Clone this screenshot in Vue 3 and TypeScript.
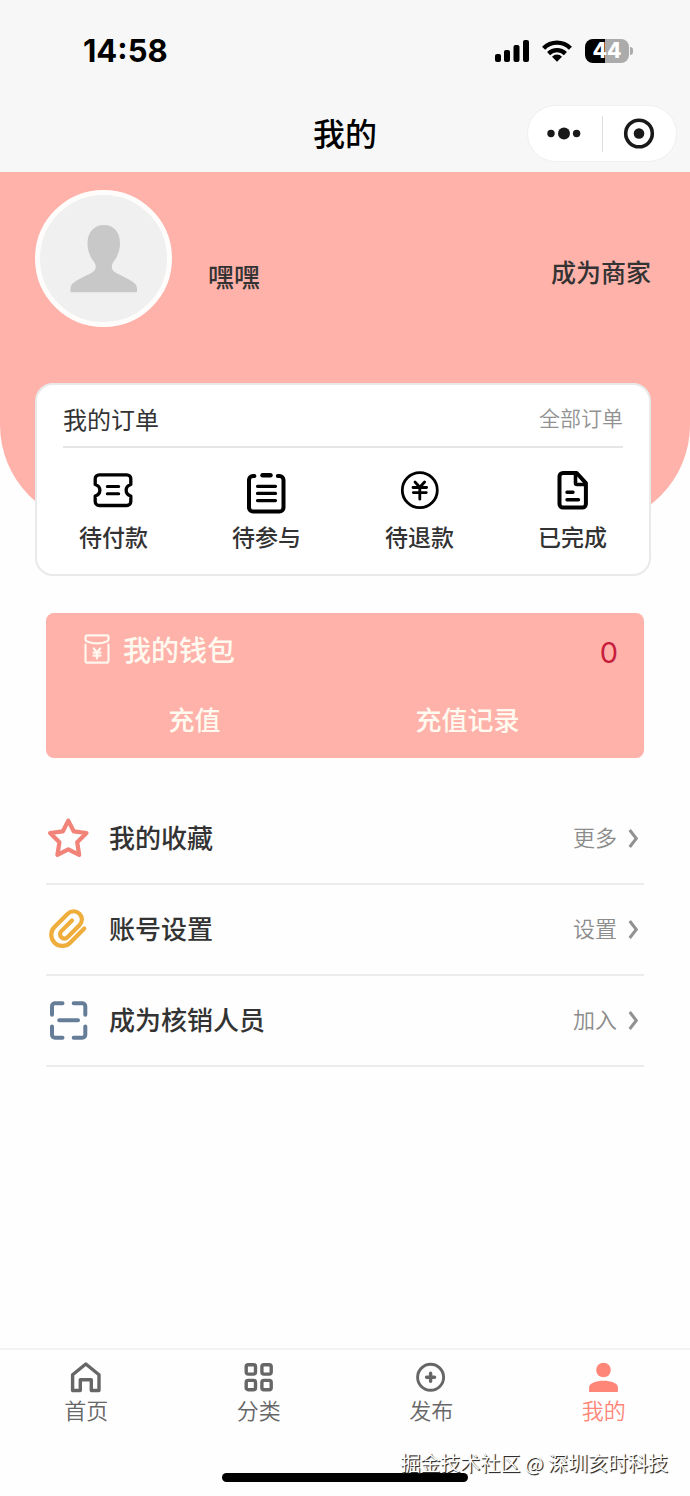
<script setup lang="ts">
import { ref } from 'vue'

type OrderIcon = 'ticket' | 'list' | 'yen' | 'doc'
type MenuIcon = 'star' | 'clip' | 'scan'
type TabIcon = 'home' | 'grid' | 'plus' | 'user'

interface Order { icon: OrderIcon; label: string }
interface MenuEntry { icon: MenuIcon; label: string; hint: string }
interface Tab { icon: TabIcon; label: string }

const orders: Order[] = [
  { icon: 'ticket', label: '待付款' },
  { icon: 'list', label: '待参与' },
  { icon: 'yen', label: '待退款' },
  { icon: 'doc', label: '已完成' },
]

const menu: MenuEntry[] = [
  { icon: 'star', label: '我的收藏', hint: '更多' },
  { icon: 'clip', label: '账号设置', hint: '设置' },
  { icon: 'scan', label: '成为核销人员', hint: '加入' },
]

const tabs: Tab[] = [
  { icon: 'home', label: '首页' },
  { icon: 'grid', label: '分类' },
  { icon: 'plus', label: '发布' },
  { icon: 'user', label: '我的' },
]

const balance = ref<number>(0)
const activeTab = ref<TabIcon>('user')
</script>

<template>
  <div class="page">
    <header class="top">
      <div class="status">
        <span class="time">14:58</span>
        <div class="indicators">
          <svg width="35" height="24" viewBox="0 0 35 24" aria-hidden="true">
            <rect x="1" y="15" width="6" height="8" rx="2" />
            <rect x="10" y="11" width="6" height="12" rx="2" />
            <rect x="19.500" y="6" width="6" height="17" rx="2" />
            <rect x="29" y="1" width="6" height="22" rx="2" />
          </svg>
          <svg width="30" height="24" viewBox="0 0 30 24" aria-hidden="true">
            <g fill="none" stroke="#000" stroke-width="4.400">
              <path d="M1.600 9.200a19 19 0 0 1 26.800 0" />
              <path d="M6.600 14.600a12 12 0 0 1 16.800 0" />
            </g>
            <path d="M15 22.800l-5-5.100a7 7 0 0 1 10 0z" />
          </svg>
          <span class="battery"><span class="cell">44</span><i class="cap"></i></span>
        </div>
      </div>
      <div class="nav">
        <h1>我的</h1>
        <div class="capsule">
          <button type="button" aria-label="更多">
            <svg width="36" height="14" viewBox="0 0.500 36 14" fill="#191919">
              <circle cx="4" cy="7" r="3.700" />
              <circle cx="17" cy="7" r="6" />
              <circle cx="29.600" cy="7" r="3.700" />
            </svg>
          </button>
          <i class="split"></i>
          <button type="button" aria-label="关闭">
            <svg width="32" height="32" viewBox="0 0.500 32 32">
              <circle cx="16" cy="16" r="13.300" fill="none" stroke="#191919" stroke-width="3.600" />
              <circle cx="16" cy="16" r="5.300" fill="#191919" />
            </svg>
          </button>
        </div>
      </div>
    </header>

    <main>
      <section class="hero">
        <div class="profile">
          <svg class="avatar" viewBox="0 0 137 137" role="img" aria-label="头像">
            <circle cx="68.500" cy="68.500" r="66" fill="#f0f0f0" stroke="#fffdfb" stroke-width="5" />
            <path
              fill="#c8c8c8"
              d="M69 35c-10 0-16.500 7.500-16.500 18 0 9 3.500 15 7 19.500 2 3 1.500 7-1 9-3 2.500-8 4-12 6.500-7 3.500-11 6-11 10.500v3.700h66.500v-3.700c0-4.500-4-7-11-10.500-4-2.500-9-4-12-6.500-2.500-2-3-6-1-9 3.500-4.500 7-10.500 7-19.500 0-10.500-6-18-16-18z"
            />
          </svg>
          <span class="name">嘿嘿</span>
          <a class="merchant" href="#">成为商家</a>
        </div>
      </section>

      <section class="orders">
        <div class="orders-head">
          <h2>我的订单</h2>
          <a href="#">全部订单</a>
        </div>
        <div class="orders-grid">
          <button v-for="o in orders" :key="o.icon" type="button" class="order">
            <svg viewBox="1 0 48 48" width="48" height="48" fill="none" stroke="#000" stroke-linecap="round" stroke-linejoin="round" aria-hidden="true">
              <template v-if="o.icon === 'ticket'">
                <path stroke-width="3.300" d="M10.200 8.800h27.600a4 4 0 0 1 4 4v5.700c-6.200 2-6.200 9.500 0 11.500v5.500a4 4 0 0 1-4 4H10.200a4 4 0 0 1-4-4V30c6.200-2 6.200-9.500 0-11.500v-5.700a4 4 0 0 1 4-4z" />
                <path stroke-width="3" d="M18.300 20.600h11.400M18.300 27.700h11.400" />
              </template>
              <template v-else-if="o.icon === 'list'">
                <path stroke-width="4" d="M12.400 10H11a4 4 0 0 0-4 4v27.500a4 4 0 0 0 4 4h26.500a4 4 0 0 0 4-4V14a4 4 0 0 0-4-4h-1.700" />
                <path stroke-width="4.400" d="M20.500 9.300h8" />
                <path stroke-width="3.200" d="M15.500 20.300h18M15.500 27.400h18M15.500 34.600h18" />
              </template>
              <template v-else-if="o.icon === 'yen'">
                <circle cx="24.800" cy="24.200" r="17.500" stroke-width="2.800" />
                <path stroke-width="2.800" d="M20 16l4.800 5.200 4.800-5.200M18 21.500h13.600M18.300 26.600h13M24.800 21.500v11.700" />
              </template>
              <template v-else>
                <path stroke-width="4" d="M15 7h13.700l9.200 10.200v20.800a3.500 3.500 0 0 1-3.500 3.500H15a3.500 3.500 0 0 1-3.500-3.500V10.500A3.500 3.500 0 0 1 15 7z" />
                <path stroke-width="3.600" d="M27.500 8v9a1.500 1.500 0 0 0 1.500 1.500h8.500" />
                <path stroke-width="3.400" d="M19 26.300h6M19 33.700h11.500" />
              </template>
            </svg>
            <span>{{ o.label }}</span>
          </button>
        </div>
      </section>

      <section class="wallet">
        <div class="wallet-head">
          <svg width="32" height="32" viewBox="0 0 32 32" fill="none" stroke="#fff6ee" stroke-width="2.200" stroke-linecap="round" stroke-linejoin="round" aria-hidden="true">
            <path d="M6.500 2.300h19a2 2 0 0 1 2 2V6.500a2 2 0 0 1-1.600 1.900q-9.900 4-19.800 0A2 2 0 0 1 4.500 6.500V4.300a2 2 0 0 1 2-2z" />
            <path d="M4.500 11.500v16.200a2 2 0 0 0 2 2h19a2 2 0 0 0 2-2V11.500" />
            <path d="M12.800 15.500l3.200 4 3.200-4M12.500 19.700h7M12.500 22.700h7M16 19.500v6" />
          </svg>
          <h2>我的钱包</h2>
          <span class="balance">{{ balance }}</span>
        </div>
        <div class="wallet-actions">
          <button type="button">充值</button>
          <button type="button">充值记录</button>
        </div>
      </section>

      <nav class="menu">
        <a v-for="m in menu" :key="m.icon" href="#" class="row">
          <svg viewBox="0 0 44 44" width="44" height="44" fill="none" stroke-width="4" stroke-linecap="round" stroke-linejoin="round" aria-hidden="true">
            <path v-if="m.icon === 'star'" stroke="#f28379" stroke-width="4.200" d="M22.300 3.600l5.400 10.700 12.800 1.700-9.300 9.300 2 12.600-10.900-5.600-10.900 5.600 2-12.600-9.300-9.300 12.800-1.700z" />
            <path v-else-if="m.icon === 'clip'" stroke="#efad3b" stroke-width="4.200" transform="translate(21.500 21.500) rotate(45)" d="M11.200-12.500V7.400A11.100 11.100 0 0 1-11 7.400V-11.400A8.250 8.250 0 0 1 5.500-11.400V5.500A4.300 4.300 0 0 1-3.200 5.500V-9.500" />
            <path v-else stroke="#667d98" d="M16.500 4.200H9a3 3 0 0 0-3 3v8.500M27.700 4.200h8.600a3 3 0 0 1 3 3v8.500M16.500 38.800H9a3 3 0 0 1-3-3v-8.300M27.700 38.800h8.600a3 3 0 0 0 3-3v-8.300M13.200 21.300h18.800" />
          </svg>
          <span class="label">{{ m.label }}</span>
          <span class="hint">{{ m.hint }}</span>
          <svg class="chevron" viewBox="0 0 10 20" width="10" height="20" fill="none" stroke="#919191" stroke-width="3" aria-hidden="true">
            <path d="M1.700 1L8.300 9.500l-6.600 8.500" />
          </svg>
        </a>
      </nav>
    </main>

    <footer>
      <nav class="tabs">
        <button v-for="t in tabs" :key="t.icon" type="button" class="tab" :class="{ active: t.icon === activeTab }" @click="activeTab = t.icon">
          <svg viewBox="0 0 32 32" width="32" height="32" fill="none" stroke="currentColor" stroke-width="3.400" stroke-linejoin="round" aria-hidden="true">
            <path v-if="t.icon === 'home'" d="M2.600 13.700L15.800 3l13.200 10.700v15.800h-7.700V18.800h-11v10.700H2.600z" />
            <template v-else-if="t.icon === 'grid'">
              <rect x="3.200" y="3.800" width="9.300" height="9.300" rx="2" />
              <rect x="18.900" y="3.800" width="9.300" height="9.300" rx="2" />
              <rect x="3.200" y="19.400" width="9.300" height="9.300" rx="2" />
              <rect x="18.900" y="19.400" width="9.300" height="9.300" rx="2" />
            </template>
            <template v-else-if="t.icon === 'plus'">
              <circle cx="15.600" cy="16.300" r="13" stroke-width="2.900" />
              <path stroke-linecap="round" d="M15.600 12.300v8M11.600 16.300h8" />
            </template>
            <g v-else fill="currentColor" stroke="none">
              <circle cx="15.500" cy="9" r="7.300" />
              <path d="M1.100 31v-4.500c0-4.500 7-6.800 14.400-6.800s14.400 2.300 14.400 6.800V31z" />
            </g>
          </svg>
          <span>{{ t.label }}</span>
        </button>
      </nav>
      <div class="home-bar"></div>
      <p class="credit">掘金技术社区 @ 深圳亥时科技</p>
    </footer>
  </div>
</template>

<style>
body {
  margin: 0;
  background: #fefefe;
}
</style>

<style scoped>
.page {
  display: flex;
  flex-direction: column;
  min-height: 100vh;
  color: #333;
  font-family: "Noto Sans CJK SC", "Noto Sans", sans-serif;
}
h1, h2, p {
  margin: 0;
}
button {
  padding: 0;
  border: 0;
  background: none;
  color: inherit;
  font: inherit;
  cursor: pointer;
}
a {
  color: inherit;
  text-decoration: none;
}
svg {
  display: block;
  flex: none;
}
main {
  flex: 1;
}

.top {
  background: #f7f7f7;
  color: #000;
}
.status {
  display: flex;
  align-items: center;
  justify-content: space-between;
  height: 102px;
  padding: 0 57px 0 83px;
}
.time {
  font: 700 31px/36px Inter, sans-serif;
}
.indicators {
  display: flex;
  align-items: center;
  gap: 13px;
}
.battery {
  display: flex;
  align-items: center;
  gap: 1px;
}
.cell {
  width: 44px;
  border-radius: 8px;
  background: linear-gradient(90deg, #000 45%, #ababab 45%);
  color: #fff;
  font: 800 21px/24px Inter, sans-serif;
  text-align: center;
}
.cap {
  width: 3px;
  height: 8px;
  border-radius: 0 4px 4px 0;
  background: #ababab;
}
.nav {
  display: grid;
  grid-template-columns: 1fr auto 1fr;
  align-items: center;
  height: 63px;
  padding: 0 13px 7px;
}
.nav h1 {
  grid-column: 2;
  padding-bottom: 4px;
  font-size: 32px;
  font-weight: 500;
  line-height: 40px;
}
.capsule {
  justify-self: end;
  display: flex;
  align-items: center;
  box-sizing: border-box;
  width: 150px;
  height: 57px;
  border: 1px solid #f0f0f0;
  border-radius: 29px;
  background: #fff;
}
.capsule button {
  flex: 1;
  display: flex;
  align-items: center;
  justify-content: center;
  height: 100%;
}
.split {
  width: 1px;
  height: 36px;
  background: #dedede;
}

.hero {
  box-sizing: border-box;
  height: 353px;
  padding: 18px 39px 0 35px;
  border-radius: 0 0 100px 100px;
  background: #ffb2aa;
}
.profile {
  display: flex;
  align-items: flex-end;
}
.avatar {
  width: 137px;
  height: 137px;
}
.name {
  margin: 0 auto 35px 36px;
  font-size: 26px;
  font-weight: 500;
  line-height: 32px;
}
.merchant {
  margin-bottom: 40px;
  font-size: 25px;
  font-weight: 500;
  line-height: 32px;
}

.orders {
  box-sizing: border-box;
  height: 193px;
  margin: -142px 39px 0 35px;
  border: 2px solid #e9e9e9;
  border-radius: 18px;
  background: #fff;
}
.orders-head {
  display: flex;
  align-items: center;
  justify-content: space-between;
  height: 63px;
  margin: 0 26px;
  box-sizing: border-box;
  border-bottom: 2px solid #e6e6e6;
  line-height: 32px;
}
.orders-head h2 {
  padding-top: 6px;
  font-size: 24px;
  font-weight: 400;
}
.orders-head a {
  padding-top: 2px;
  color: #919191;
  font-size: 21px;
  font-weight: 350;
}
.orders-grid {
  display: grid;
  grid-template-columns: repeat(4, 1fr);
  padding-top: 18px;
}
.order {
  display: flex;
  flex-direction: column;
  align-items: center;
  gap: 6px;
  font-size: 23px;
  font-weight: 500;
  line-height: 32px;
}

.wallet {
  box-sizing: border-box;
  height: 145px;
  margin: 37px 46px 0;
  border-radius: 8px;
  background: #ffb2aa;
  color: #fffaf0;
}
.wallet-head {
  display: flex;
  align-items: center;
  padding: 14px 26px 0 35px;
}
.wallet-head h2 {
  margin-left: 10px;
  font-size: 28px;
  font-weight: 500;
  line-height: 40px;
}
.balance {
  margin-left: auto;
  padding-top: 8px;
  color: #c81e3c;
  font: 400 29px/36px Inter, sans-serif;
}
.wallet-actions {
  display: grid;
  grid-template-columns: 1fr 1fr;
  padding: 28px 40px 0 12px;
}
.wallet-actions button {
  font-size: 26px;
  font-weight: 500;
  line-height: 40px;
}

.menu {
  margin: 36px 46px 0;
}
.row {
  display: flex;
  align-items: center;
  box-sizing: border-box;
  height: 91px;
  padding-right: 6px;
  border-bottom: 2px solid #ececec;
}
.label {
  margin-left: 19px;
  padding-bottom: 4px;
  font-size: 26px;
  font-weight: 500;
  line-height: 32px;
}
.hint {
  margin: 0 11px 0 auto;
  padding-bottom: 5px;
  color: #8c8c8c;
  font-size: 22px;
  font-weight: 350;
  line-height: 32px;
}

footer {
  position: relative;
}
.tabs {
  display: grid;
  grid-template-columns: repeat(4, 1fr);
  padding-top: 11px;
  border-top: 2px solid #f3f3f3;
}
.tab {
  display: flex;
  flex-direction: column;
  align-items: center;
  color: #666;
  font-size: 22px;
  font-weight: 350;
  line-height: 32px;
}
.tab.active {
  color: #fe8678;
}
.home-bar {
  width: 246px;
  height: 9px;
  margin: 48px auto 14px;
  border-radius: 5px;
  background: #000;
}
.credit {
  position: absolute;
  right: 22px;
  bottom: 18px;
  color: #fff;
  font-size: 20px;
  font-weight: 350;
  line-height: 30px;
  white-space: nowrap;
  text-shadow: 1px 1px 1px #222, 1px 1px 0 #777;
}
</style>
